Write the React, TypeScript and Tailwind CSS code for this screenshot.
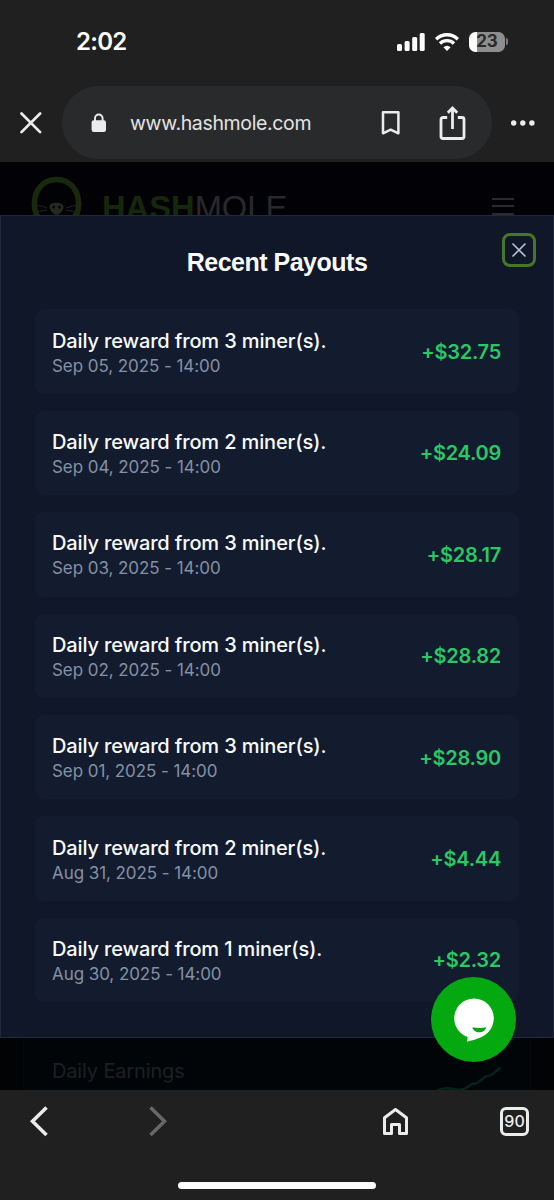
const payouts = [
  { miners: 3, date: 'Sep 05, 2025 - 14:00', amount: '+$32.75' },
  { miners: 2, date: 'Sep 04, 2025 - 14:00', amount: '+$24.09' },
  { miners: 3, date: 'Sep 03, 2025 - 14:00', amount: '+$28.17' },
  { miners: 3, date: 'Sep 02, 2025 - 14:00', amount: '+$28.82' },
  { miners: 3, date: 'Sep 01, 2025 - 14:00', amount: '+$28.90' },
  { miners: 2, date: 'Aug 31, 2025 - 14:00', amount: '+$4.44' },
  { miners: 1, date: 'Aug 30, 2025 - 14:00', amount: '+$2.32' },
]

function StatusBar() {
  return (
    <div className="flex h-[83px] items-center justify-between pl-[76px] pr-[46px]">
      <span className="text-[24px] font-semibold leading-none tracking-[-0.7px] text-white">2:02</span>
      <div className="flex items-center">
        <svg width="29" height="20" viewBox="0 0 29 20" fill="#fff">
          <rect x="1" y="12" width="5" height="7" rx="1.5" />
          <rect x="8.6" y="9" width="5" height="10" rx="1.5" />
          <rect x="16.2" y="5" width="5" height="14" rx="1.5" />
          <rect x="23.7" y="1" width="5" height="18" rx="1.5" />
        </svg>
        <svg className="ml-[10px]" width="24" height="20" viewBox="0 0 24 20" fill="none" stroke="#fff" strokeWidth="3.3">
          <path d="M1.1 7.2a15.6 15.6 0 0 1 21.8 0" />
          <path d="M5 11.5a10 10 0 0 1 14 0" />
          <path d="M12 19l-3.6-3.8a5.6 5.6 0 0 1 7.2 0z" fill="#fff" stroke="none" />
        </svg>
        <div className="ml-[10px] flex h-5 w-9 items-center justify-center rounded-[6.5px] bg-linear-to-r from-white from-23% to-[#8e8e8e] to-23% text-[17px] font-bold leading-none text-[#2a2a2a]">
          23
        </div>
        <span className="ml-px h-[7px] w-[2px] rounded-r-full bg-[#7c7c7c]" />
      </div>
    </div>
  )
}

function AddressBar() {
  return (
    <div className="flex h-[79px] items-start pl-5 pt-[3px]">
      <svg className="mt-[26px] shrink-0" width="22" height="22" viewBox="0 0 22 22" stroke="#ececec" strokeWidth="2.7" strokeLinecap="round">
        <path d="M1.5 1.5l18.6 18.6M20.1 1.5L1.5 20.1" />
      </svg>
      <div className="ml-5 flex h-[73px] w-[430px] shrink-0 items-center rounded-full bg-[#292a2c] pl-[29px]">
        <svg width="16" height="20" viewBox="0 0 16 20">
          <path d="M4 8V5.3a3.8 3.8 0 0 1 7.6 0V8" fill="none" stroke="#ececec" strokeWidth="1.9" />
          <rect x="0.6" y="7.3" width="14.4" height="11.6" rx="2.2" fill="#ececec" />
        </svg>
        <span className="ml-[23px] w-[240px] pt-0.5 text-[19.5px] leading-none tracking-[-0.35px] text-[#e3e3e3]">www.hashmole.com</span>
        <svg className="ml-[11px]" width="20" height="26" viewBox="0 0 20 26" fill="none" stroke="#ececec" strokeWidth="2.5">
          <path d="M2 2.3h15.4v21l-7.7-3.6L2 23.3z" strokeLinejoin="round" />
        </svg>
        <svg className="ml-[38px]" width="27" height="36" viewBox="0 0 27 36" fill="none" stroke="#ececec" strokeWidth="2.8">
          <path d="M8.2 12.5H4a2 2 0 0 0-2 2V31.5a2 2 0 0 0 2 2h19a2 2 0 0 0 2-2V14.5a2 2 0 0 0-2-2h-4.2" />
          <path d="M13.5 24V4M8.8 7.8l4.7-4.7 4.7 4.7" />
        </svg>
      </div>
      <svg className="ml-[18px] mt-[33px] shrink-0" width="26" height="8" viewBox="0 0 26 8" fill="#ececec">
        <circle cx="3.7" cy="4" r="2.7" />
        <circle cx="12.8" cy="4" r="2.7" />
        <circle cx="21.9" cy="4" r="2.7" />
      </svg>
    </div>
  )
}

/* page header, dimmed behind the dialog */
function SiteHeader() {
  return (
    <div className="flex h-[53px] items-start overflow-hidden bg-[#020206] pl-[30px]">
      <svg className="mt-3 shrink-0" width="54" height="56" viewBox="0 0 54 56" fill="none">
        <path d="M26.500 5.500C13 5.500 4.400 16 4.400 30s9 22 22.100 22 22.100-8 22.100-22S40 5.500 26.500 5.500z" stroke="#18290c" strokeWidth="5.600" />
        <path d="M19.500 33c0-3 3-4.300 7-4.300s7 1.300 7 4.300-4 8-7 8-7-5-7-8z" fill="#25291f" />
        <path d="M17 34C12 32 7 31 2 31M17 36L5 38M36 34c5-2 10-3 15-3M36 36l12 2" stroke="#20251b" />
        <circle cx="23.600" cy="33" r="1.600" fill="#06080a" />
        <circle cx="29.400" cy="33" r="1.600" fill="#06080a" />
      </svg>
      <p className="ml-[18px] mt-[29px] whitespace-nowrap font-['Liberation_Sans',sans-serif] text-[32.7px] leading-[34px]">
        <span className="font-bold text-[#16280b]">HASH</span>
        <span className="text-[#29292d]">MOLE</span>
      </p>
      <div className="ml-auto mr-[40px] mt-[36px] flex w-[22px] flex-col gap-[5.4px]">
        <span className="h-[2px] bg-[#2b2b2e]" />
        <span className="h-[2px] bg-[#2b2b2e]" />
        <span className="h-[2px] bg-[#2b2b2e]" />
      </div>
    </div>
  )
}

function PayoutsDialog() {
  return (
    <div className="relative h-[823px] border border-[#1e2a3c] bg-[#101728] px-[34px] pt-[28px]">
      <button className="absolute right-[17px] top-[17px] flex size-[34px] items-center justify-center rounded-lg border-3 border-[#47762a]">
        <svg width="16" height="16" viewBox="0 0 16 16" stroke="#b7c0cd" strokeWidth="1.7" strokeLinecap="round">
          <path d="M2 2l12 12M14 2L2 14" />
        </svg>
      </button>
      <h2 className="text-center font-['Liberation_Sans',sans-serif] text-[25px] font-bold leading-9 tracking-[-0.5px] text-slate-50">
        Recent Payouts
      </h2>
      <div className="mt-[29.4px] flex flex-col gap-[17px]">
        {payouts.map(p => (
          <div key={p.date} className="flex h-[84.4px] items-center justify-between rounded-[9px] bg-[#131c2e] px-[17px]">
            <div className="pt-[2px]">
              <p className="text-[20px] font-medium leading-[26px] tracking-[-0.14px] text-slate-50">Daily reward from {p.miners} miner(s).</p>
              <p className="text-[17px] leading-6 tracking-[-0.07px] text-[#8490a5]">{p.date}</p>
            </div>
            <p className="pr-px pt-px text-[20px] font-semibold tracking-[-0.25px] text-[#2cc765]">{p.amount}</p>
          </div>
        ))}
      </div>
      {/* chat widget */}
      <button className="absolute bottom-[-25px] right-[37px] flex size-[85px] items-center justify-center rounded-full bg-[#04a80f]">
        <svg width="44" height="48" viewBox="0 0 44 48">
          <circle cx="22" cy="22.3" r="19.8" fill="#fff" />
          <path d="M13.500 38l2.300 2-.8 5.700C24 43.500 34 41 39.300 32z" fill="#fff" />
          <path d="M20.500 31.300c4 1 9.500 1 13.600 0-.6 3.200-3.300 5-6.800 5s-6.200-1.800-6.800-5z" fill="#04a80f" />
        </svg>
      </button>
    </div>
  )
}

function EarningsCard() {
  return (
    <div className="h-[52px] overflow-hidden bg-[#020305] px-[23px]">
      <div className="flex h-full justify-between border-x border-[#05090d] bg-[#020508] pl-[28px] pr-[28px]">
        <p className="mt-[19px] text-[20px] leading-7 tracking-[-0.15px] text-[#1c2025]">Daily Earnings</p>
        <svg className="mt-[22px]" width="70" height="30" viewBox="0 0 70 30" fill="none" stroke="#06231a" strokeWidth="2.4" strokeLinecap="round">
          <path d="M6 30c5-2 11-2 15-1 4 1 9 1 13-1l6-4c3-1 5 0 8-3l5-4c3-2 5 0 9-4l6-5" />
        </svg>
      </div>
    </div>
  )
}

function BottomBar() {
  return (
    <div className="flex h-[110px] flex-col bg-[#202020]">
      <div className="flex h-[62px] items-center pl-[29px] pr-[25px]">
        <svg width="20" height="32" viewBox="0 0 20 32" fill="none" stroke="#ececec" strokeWidth="3.5">
          <path d="M17.5 2.500L3.5 16.300l14 13.700" />
        </svg>
        <svg className="ml-[99px]" width="20" height="32" viewBox="0 0 20 32" fill="none" stroke="#68686b" strokeWidth="3.5">
          <path d="M2.500 2.500l14 13.800-14 13.700" />
        </svg>
        <svg className="ml-auto" width="27" height="29" viewBox="0 0 27 29" fill="none" stroke="#ececec" strokeWidth="3" strokeLinejoin="round">
          <path d="M2.500 10.800L13.500 2.500l11 8.300V26.500h-7v-9h-8v9h-7z" />
        </svg>
        <div className="ml-[91px] flex size-[29px] items-center justify-center rounded-[6px] border-3 border-[#ececec] text-[16px] font-medium leading-none text-[#ececec]">
          90
        </div>
      </div>
      <div className="mx-auto mt-[30px] h-[7px] w-[198px] rounded-full bg-white" />
    </div>
  )
}

export default function App() {
  return (
    <div className="h-[1200px] w-[554px] overflow-hidden bg-[#202020] font-[Inter,sans-serif]">
      <StatusBar />
      <AddressBar />
      <SiteHeader />
      <PayoutsDialog />
      <EarningsCard />
      <BottomBar />
    </div>
  )
}
